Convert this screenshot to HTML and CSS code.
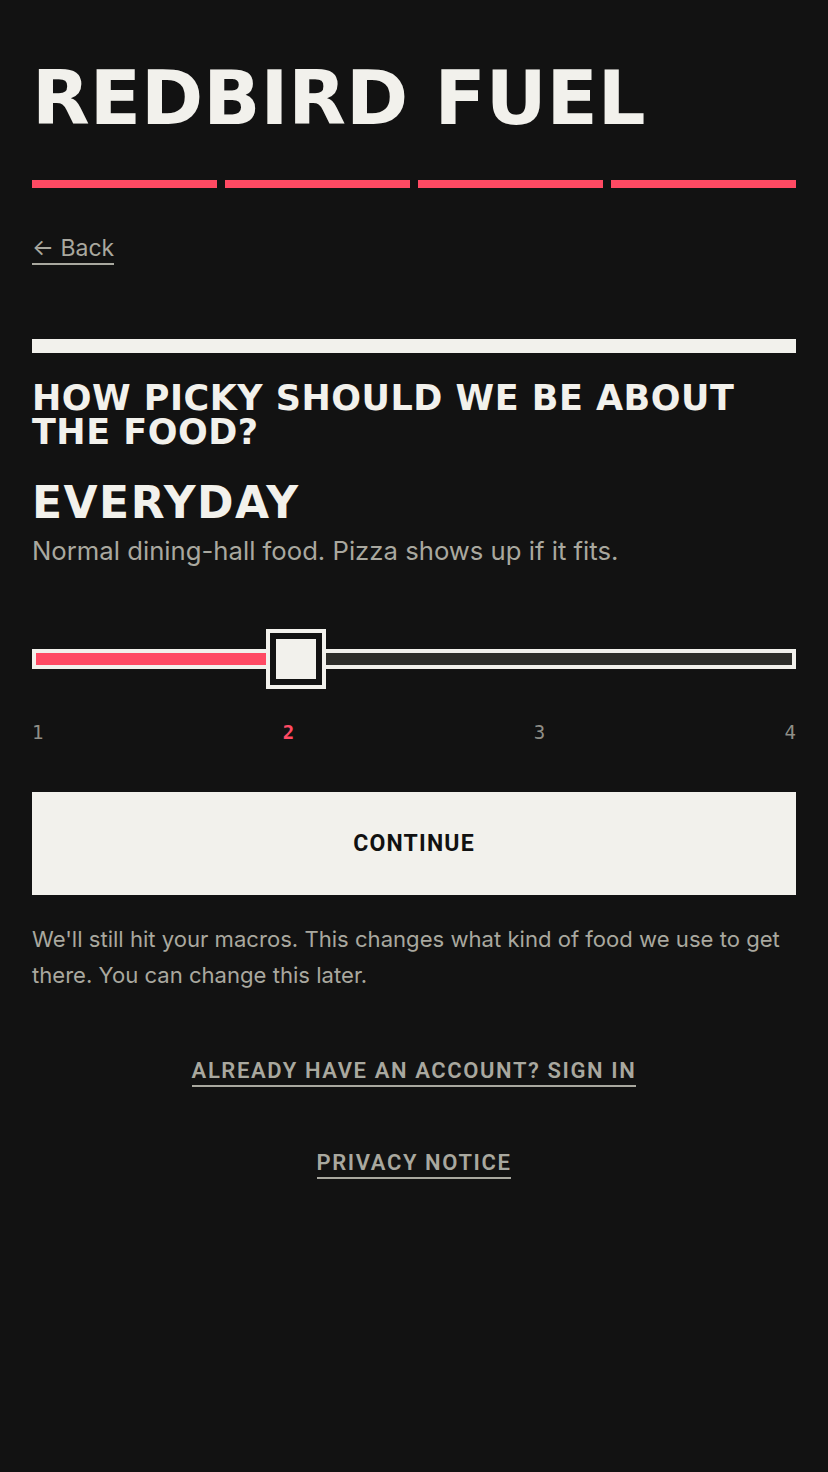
FILE: index.html
```html
<!DOCTYPE html>
<html lang="en">
<head>
<meta charset="utf-8">
<title>Redbird Fuel</title>
<link rel="stylesheet" href="styles.css">
</head>
<body>
<main class="page">
  <h1 class="brand">REDBIRD FUEL</h1>
  <div class="steps">
    <span class="step"></span>
    <span class="step"></span>
    <span class="step"></span>
    <span class="step"></span>
  </div>
  <a class="back" href="#">&larr; Back</a>
  <div class="rule"></div>
  <h2 class="question">HOW PICKY SHOULD WE BE ABOUT THE FOOD?</h2>
  <h3 class="level">EVERYDAY</h3>
  <p class="desc">Normal dining-hall food. Pizza shows up if it fits.</p>
  <div class="slider">
    <div class="track"><div class="fill" style="width: 31%"></div></div>
    <div class="thumb" style="left: 234px"><span class="thumb-core"></span></div>
  </div>
  <div class="ticks">
    <span class="tick">1</span>
    <span class="tick active">2</span>
    <span class="tick">3</span>
    <span class="tick">4</span>
  </div>
  <button class="continue" type="button">CONTINUE</button>
  <p class="note">We'll still hit your macros. This changes what kind of food we use to get there. You can change this later.</p>
  <nav class="links">
    <a class="link" href="#">ALREADY HAVE AN ACCOUNT? SIGN IN</a>
    <a class="link" href="#">PRIVACY NOTICE</a>
  </nav>
</main>
</body>
</html>
```
FILE: styles.css
```css
* { box-sizing: border-box; }
html, body { margin: 0; padding: 0; background: #121212; }
body { font-family: Inter, "Liberation Sans", sans-serif; color: #f2f1ec; }
.page { padding: 58px 32px 40px; display: flex; flex-direction: column; }
.brand {
  margin: 0;
  font-family: "DejaVu Sans", "Liberation Sans", sans-serif;
  font-weight: 700;
  font-size: 75px;
  line-height: 80px;
  color: #f2f1ec;
}
.steps { display: flex; gap: 8px; margin-top: 42px; }
.step { flex: 1; height: 8px; background: #ff4a63; }
.back {
  align-self: flex-start;
  margin-top: 46px;
  font-family: Inter, "Liberation Sans", sans-serif;
  font-size: 23px;
  line-height: 28px;
  color: #a9a89f;
  text-decoration: none;
  border-bottom: 2px solid #a9a89f;
  padding-bottom: 1px;
}
.rule { height: 14px; background: #f2f1ec; margin-top: 74px; }
.question {
  margin: 28px 0 0;
  font-family: "DejaVu Sans", "Liberation Sans", sans-serif;
  font-weight: 700;
  font-size: 35px;
  line-height: 34px;
  letter-spacing: 0.5px;
  color: #f2f1ec;
}
.level {
  margin: 30px 0 0;
  font-family: "DejaVu Sans", "Liberation Sans", sans-serif;
  font-weight: 700;
  font-size: 44px;
  line-height: 48px;
  letter-spacing: 1.5px;
  color: #f2f1ec;
}
.desc {
  margin: 8px 0 0;
  font-family: Inter, "Liberation Sans", sans-serif;
  font-size: 25.7px;
  line-height: 32px;
  color: #a9a89f;
}
.slider { position: relative; height: 60px; margin-top: 62px; }
.track {
  position: absolute; left: 0; right: 0; top: 20px;
  height: 20px; border: 4px solid #f2f1ec; background: #2e2e2a;
}
.fill { height: 100%; background: #ff4a63; }
.thumb {
  position: absolute; top: 0; width: 60px; height: 60px;
  border: 4px solid #f2f1ec; background: #121212; padding: 6px;
}
.thumb-core { display: block; width: 40px; height: 40px; background: #f2f1ec; }
.ticks {
  display: flex; justify-content: space-between; margin-top: 32px;
  font-family: "DejaVu Sans Mono", monospace; font-size: 19px; line-height: 22px; color: #8f8e87;
}
.tick.active { color: #ff4a63; font-weight: 700; }
.continue {
  margin-top: 49px; height: 103px; border: 0; background: #f2f1ec; color: #111;
  font-family: Roboto, "Liberation Sans", sans-serif; font-weight: 700; font-size: 23px; letter-spacing: 1.2px;
  cursor: pointer;
}
.note {
  margin: 26px 0 0; font-family: Inter, "Liberation Sans", sans-serif; font-size: 22.1px; line-height: 36px; color: #a9a89f;
}
.links { display: flex; flex-direction: column; align-items: center; gap: 64px; margin-top: 66px; }
.link {
  font-family: Roboto, "Liberation Sans", sans-serif; font-weight: 600; font-size: 22px; letter-spacing: 1.6px;
  color: #a9a89f; text-decoration: none; border-bottom: 2px solid #a9a89f; line-height: 24px; padding-bottom: 2px;
}
```
